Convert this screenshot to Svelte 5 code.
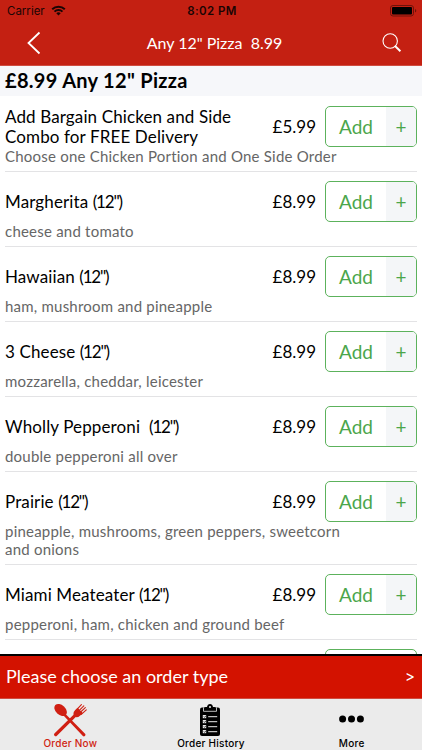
<script>
	const items = [
		{ name: 'Add Bargain Chicken and Side Combo for FREE Delivery', price: '£5.99', description: 'Choose one Chicken Portion and One Side Order' },
		{ name: 'Margherita ', size: '(12")', price: '£8.99', description: 'cheese and tomato' },
		{ name: 'Hawaiian ', size: '(12")', price: '£8.99', description: 'ham, mushroom and pineapple' },
		{ name: '3 Cheese ', size: '(12")', price: '£8.99', description: 'mozzarella, cheddar, leicester' },
		{ name: 'Wholly Pepperoni  ', size: '(12")', price: '£8.99', description: 'double pepperoni all over' },
		{ name: 'Prairie ', size: '(12")', price: '£8.99', description: 'pineapple, mushrooms, green peppers, sweetcorn and onions' },
		{ name: 'Miami Meateater ', size: '(12")', price: '£8.99', description: 'pepperoni, ham, chicken and ground beef' },
		{ name: '', price: '', description: '' }
	];

	let activeTab = $state('order');
</script>

<div class="app">
	<header>
		<div class="status-bar">
			<div class="carrier">
				<span>Carrier</span>
				<svg width="15" height="11" viewBox="0 0 15 11">
					<path d="M1.2 4.2a9 9 0 0 1 12.6 0M3.5 6.6a5.7 5.7 0 0 1 8 0" fill="none" stroke="#1a0504" stroke-width="2" />
					<path d="M5.3 8.3a3.1 3.1 0 0 1 4.4 0L7.5 10.6z" fill="#1a0504" />
				</svg>
			</div>
			<span class="time">8:02 PM</span>
			<svg class="battery" width="27" height="12" viewBox="0 0 27 12">
				<rect x="0.5" y="0.5" width="23" height="10.5" rx="2.5" fill="none" stroke="#6f120a" />
				<rect x="2" y="2" width="20" height="7.5" rx="1" fill="#000" />
				<path d="M25 4v3.5q1.3-.5 1.3-1.75T25 4z" fill="#6f120a" />
			</svg>
		</div>
		<div class="nav">
			<button class="icon-button" aria-label="Back">
				<svg width="14" height="24" viewBox="0 0 14 24">
					<path d="M12.5 1.5L1.5 12l11 10.5" fill="none" stroke="#fff" stroke-width="1.8" />
				</svg>
			</button>
			<h1>Any 12" Pizza&nbsp; 8.99</h1>
			<button class="icon-button search" aria-label="Search">
				<svg width="20" height="20" viewBox="0 0 20 20">
					<circle cx="8.2" cy="8" r="7.2" fill="none" stroke="#fff" stroke-width="1.1" />
					<path d="M12.8 12.8l5.6 5.4" stroke="#fff" stroke-width="2" />
				</svg>
			</button>
		</div>
	</header>

	<main>
		<h2>£8.99 Any 12" Pizza</h2>
		{#each items as item}
			<div class="item">
				<div class="item-top">
					<span class="name">{item.name}{#if item.size}<span class="size">{item.size}</span>{/if}</span>
					<span class="price">{item.price}</span>
					<button class="add" aria-label="Add">
						{#if item.name}
							<span class="add-label">Add</span>
							<span class="plus">+</span>
						{/if}
					</button>
				</div>
				<p>{item.description}</p>
			</div>
		{/each}
	</main>

	<button class="order-type">
		<span>Please choose an order type</span>
		<span class="arrow">&gt;</span>
	</button>

	<nav class="tabs">
		<button class:active={activeTab === 'order'} onclick={() => (activeTab = 'order')}>
			<svg width="34" height="34" viewBox="0 0 34 34" fill="currentColor">
				<ellipse cx="7.6" cy="7" rx="4.9" ry="7.2" transform="rotate(-47 7.6 7)" />
				<path d="M10.5 12.5l1.8-1.8 20 20.2a1.7 1.7 0 0 1-2.4 2.2z" />
				<path d="M21.8 10.6l2.2 2.2L3.9 32.7a1.7 1.7 0 0 1-2.5-2.3z" />
				<path d="M20.4 11.3Q20.3 9 22 7.3l2.6-2.6 5.2 5.2-2.8 2.8q-2 1.9-4.6 1.4z" />
				<path d="M23.3 7.2l5.1-5.5M25.3 8.3l5.5-5.5M26.6 10l5.7-5.3M28.3 11.4l5-4.5" stroke="currentColor" stroke-width="1.1" stroke-linecap="round" />
			</svg>
			<span>Order Now</span>
		</button>
		<button class:active={activeTab === 'history'} onclick={() => (activeTab = 'history')}>
			<svg width="34" height="34" viewBox="0 0 34 34">
				<rect x="6" y="4.5" width="20" height="28.5" rx="2" fill="currentColor" />
				<path d="M10 8V5.5Q10 4 11.5 4H13Q13.5 1 16 1t3 3h1.5Q22 4 22 5.5V8z" fill="currentColor" />
				<path d="M9.5 4.5v3.8h13V4.5" fill="none" stroke="#ebebeb" stroke-width="0.8" />
				<circle cx="16" cy="4" r="1" fill="#ebebeb" />
				<g fill="#ebebeb">
					<rect x="8.8" y="12" width="3.4" height="3.2" />
					<rect x="8.8" y="17" width="3.4" height="3.2" />
					<rect x="8.8" y="22" width="3.4" height="3.2" />
					<rect x="8.8" y="27" width="3.4" height="3.2" />
				</g>
				<path d="M14.2 13.7h9M14.2 18.7h9M14.2 23.7h9M14.2 28.7h9" stroke="#ebebeb" />
				<path d="M9.8 13.5l.8.9 1.5-1.8M9.8 18.5l.8.9 1.5-1.8M9.8 23.5l.8.9 1.5-1.8M9.8 28.5l.8.9 1.5-1.8" fill="none" stroke="currentColor" stroke-width="0.7" />
			</svg>
			<span>Order History</span>
		</button>
		<button class:active={activeTab === 'more'} onclick={() => (activeTab = 'more')}>
			<svg width="34" height="34" viewBox="0 0 34 34" fill="currentColor">
				<circle cx="7.6" cy="16" r="3.5" />
				<circle cx="16.5" cy="16" r="3.5" />
				<circle cx="25.4" cy="16" r="3.5" />
			</svg>
			<span>More</span>
		</button>
	</nav>
</div>

<style>
	:global(body) {
		background: #fff;
	}
	.app {
		display: flex;
		flex-direction: column;
		width: 422px;
		height: 750px;
		overflow: hidden;
		font-family: Lato, 'Open Sans', sans-serif;
		color: #000;
	}
	button {
		margin: 0;
		padding: 0;
		border: none;
		background: none;
		font: inherit;
		color: inherit;
		cursor: pointer;
	}
	svg {
		display: block;
	}
	header {
		flex: none;
		height: 66px;
		box-sizing: border-box;
		background: #c42012;
		border-bottom: 1px solid #cf4c40;
	}
	.status-bar {
		display: grid;
		grid-template-columns: 1fr auto 1fr;
		align-items: center;
		height: 21px;
		padding: 0 5px 0 7px;
		font-family: Inter, sans-serif;
		font-size: 11.5px;
		color: #1a0504;
	}
	.carrier {
		display: flex;
		align-items: center;
		gap: 6px;
	}
	.time {
		font-weight: 600;
		letter-spacing: 0.4px;
	}
	.battery {
		justify-self: end;
	}
	.nav {
		display: flex;
		align-items: center;
		justify-content: space-between;
		height: 44px;
		padding: 0 20px 0 27px;
		color: #fff;
	}
	.nav h1 {
		margin: 0;
		padding-left: 6px;
		font-size: 16px;
		font-weight: 400;
		line-height: 20px;
	}
	main {
		flex: 1;
		min-height: 0;
		overflow: hidden;
	}
	h2 {
		height: 30px;
		margin: 0 0 1px;
		padding-left: 5px;
		background: #f6f7fa;
		font-size: 20px;
		font-weight: 700;
		line-height: 28px;
		letter-spacing: 0.3px;
	}
	.item {
		margin: 0 5px;
		padding: 9px 0 6px;
		border-bottom: 1px solid #e3e3e5;
	}
	.item-top {
		display: flex;
		align-items: center;
		height: 41px;
	}
	.name {
		flex: 1;
		padding-right: 25px;
		font-size: 17px;
		line-height: 20px;
		letter-spacing: 0.12px;
		white-space: pre-wrap;
	}
	.size {
		letter-spacing: -1.2px;
	}
	.price {
		margin-right: 9px;
		font-size: 17px;
	}
	.add {
		display: flex;
		box-sizing: border-box;
		width: 92px;
		height: 41px;
		border: 1px solid #5cb25c;
		border-radius: 5px;
		overflow: hidden;
		color: #4ba64b;
		line-height: 40px;
	}
	.add-label {
		flex: 1;
		font-size: 19px;
	}
	.plus {
		width: 30px;
		background: #f4f6f8;
		font-size: 19px;
	}
	.item p {
		width: 350px;
		min-height: 18px;
		margin: 0;
		font-size: 15px;
		line-height: 18px;
		letter-spacing: 0.22px;
		color: #666;
	}
	.order-type {
		flex: none;
		display: flex;
		align-items: center;
		justify-content: space-between;
		height: 45px;
		padding: 0 7px 2px 6px;
		border-top: 2px solid #000;
		border-bottom: 1px solid #cf4c40;
		background: #d31200;
		font-size: 18px;
		color: #fff;
	}
	.arrow {
		font-family: Inter, sans-serif;
		font-size: 15px;
	}
	.tabs {
		flex: none;
		display: flex;
		justify-content: space-between;
		height: 51px;
		background: #ebebeb;
	}
	.tabs button {
		display: flex;
		flex-direction: column;
		align-items: center;
		width: 141px;
		padding-top: 4px;
		font-family: Inter, sans-serif;
		font-size: 10px;
		font-weight: 500;
		line-height: 12px;
		letter-spacing: 0.25px;
	}
	.tabs .active {
		color: #d01f12;
	}
</style>
